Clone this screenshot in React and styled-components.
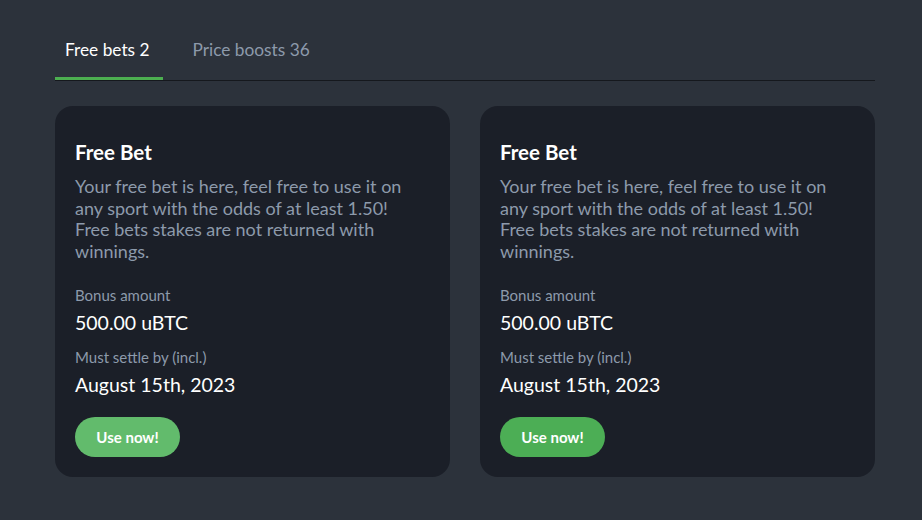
import React from 'react';
import styled, { createGlobalStyle } from 'styled-components';

const GlobalStyle = createGlobalStyle`
  html, body {
    margin: 0;
    padding: 0;
    background: #2c323b;
  }
  body {
    font-family: Lato, "Noto Sans", sans-serif;
    -webkit-font-smoothing: antialiased;
  }
`;

const Page = styled.div`
  width: 922px;
  height: 520px;
  padding: 30px 47px 0 55px;
  box-sizing: border-box;
`;

const Tabs = styled.div`
  display: flex;
  border-bottom: 1px solid #15181d;
`;

const Tab = styled.button`
  background: none;
  border: none;
  font-family: inherit;
  font-size: 17.3px;
  line-height: 20px;
  padding: 10px 13px 20px 10px;
  margin-right: 20px;
  cursor: pointer;
  color: ${p => (p.active ? '#ffffff' : '#8d9aab')};
  box-shadow: ${p => (p.active ? 'inset 0 -3px 0 #4caf50' : 'none')};
`;

const Grid = styled.div`
  display: grid;
  grid-template-columns: 395px 395px;
  gap: 30px;
  margin-top: 25px;
`;

const Card = styled.div`
  background: #1b1f28;
  border-radius: 18px;
  padding: 34px 20px 20px;
  height: 371px;
  box-sizing: border-box;
  display: flex;
  flex-direction: column;
`;

const Title = styled.h3`
  margin: 0;
  font-size: 20.5px;
  font-weight: 700;
  color: #ffffff;
  line-height: 24px;
`;

const Description = styled.p`
  margin: 12px 0 0;
  max-width: 340px;
  font-size: 18px;
  line-height: 21.7px;
  color: #8d9aab;
`;

const Label = styled.div`
  font-size: 15px;
  color: #8d9aab;
  line-height: 18px;
  margin-top: ${p => p.$top || 0}px;
`;

const Value = styled.div`
  font-size: 19.5px;
  color: #ffffff;
  line-height: 24px;
  margin-top: 7px;
`;

const UseButton = styled.button`
  margin-top: 20px;
  align-self: flex-start;
  width: 105px;
  height: 40px;
  border: none;
  border-radius: 20px;
  background: ${p => (p.$hover ? '#62bb6c' : '#4cae55')};
  color: #ffffff;
  font-family: inherit;
  font-size: 15px;
  font-weight: 700;
  cursor: pointer;
`;

const bets = [
  { id: 1, hover: true },
  { id: 2, hover: false },
];

function FreeBetCard({ hover }) {
  return (
    <Card>
      <Title>Free Bet</Title>
      <Description>
        Your free bet is here, feel free to use it on any sport with the odds of at
        least 1.50! Free bets stakes are not returned with winnings.
      </Description>
      <Label $top={23}>Bonus amount</Label>
      <Value>500.00 uBTC</Value>
      <Label $top={13}>Must settle by (incl.)</Label>
      <Value>August 15th, 2023</Value>
      <UseButton $hover={hover}>Use now!</UseButton>
    </Card>
  );
}

export default function App() {
  return (
    <>
      <GlobalStyle />
      <Page>
        <Tabs>
          <Tab active>Free bets 2</Tab>
          <Tab>Price boosts 36</Tab>
        </Tabs>
        <Grid>
          {bets.map(b => (
            <FreeBetCard key={b.id} hover={b.hover} />
          ))}
        </Grid>
      </Page>
    </>
  );
}
